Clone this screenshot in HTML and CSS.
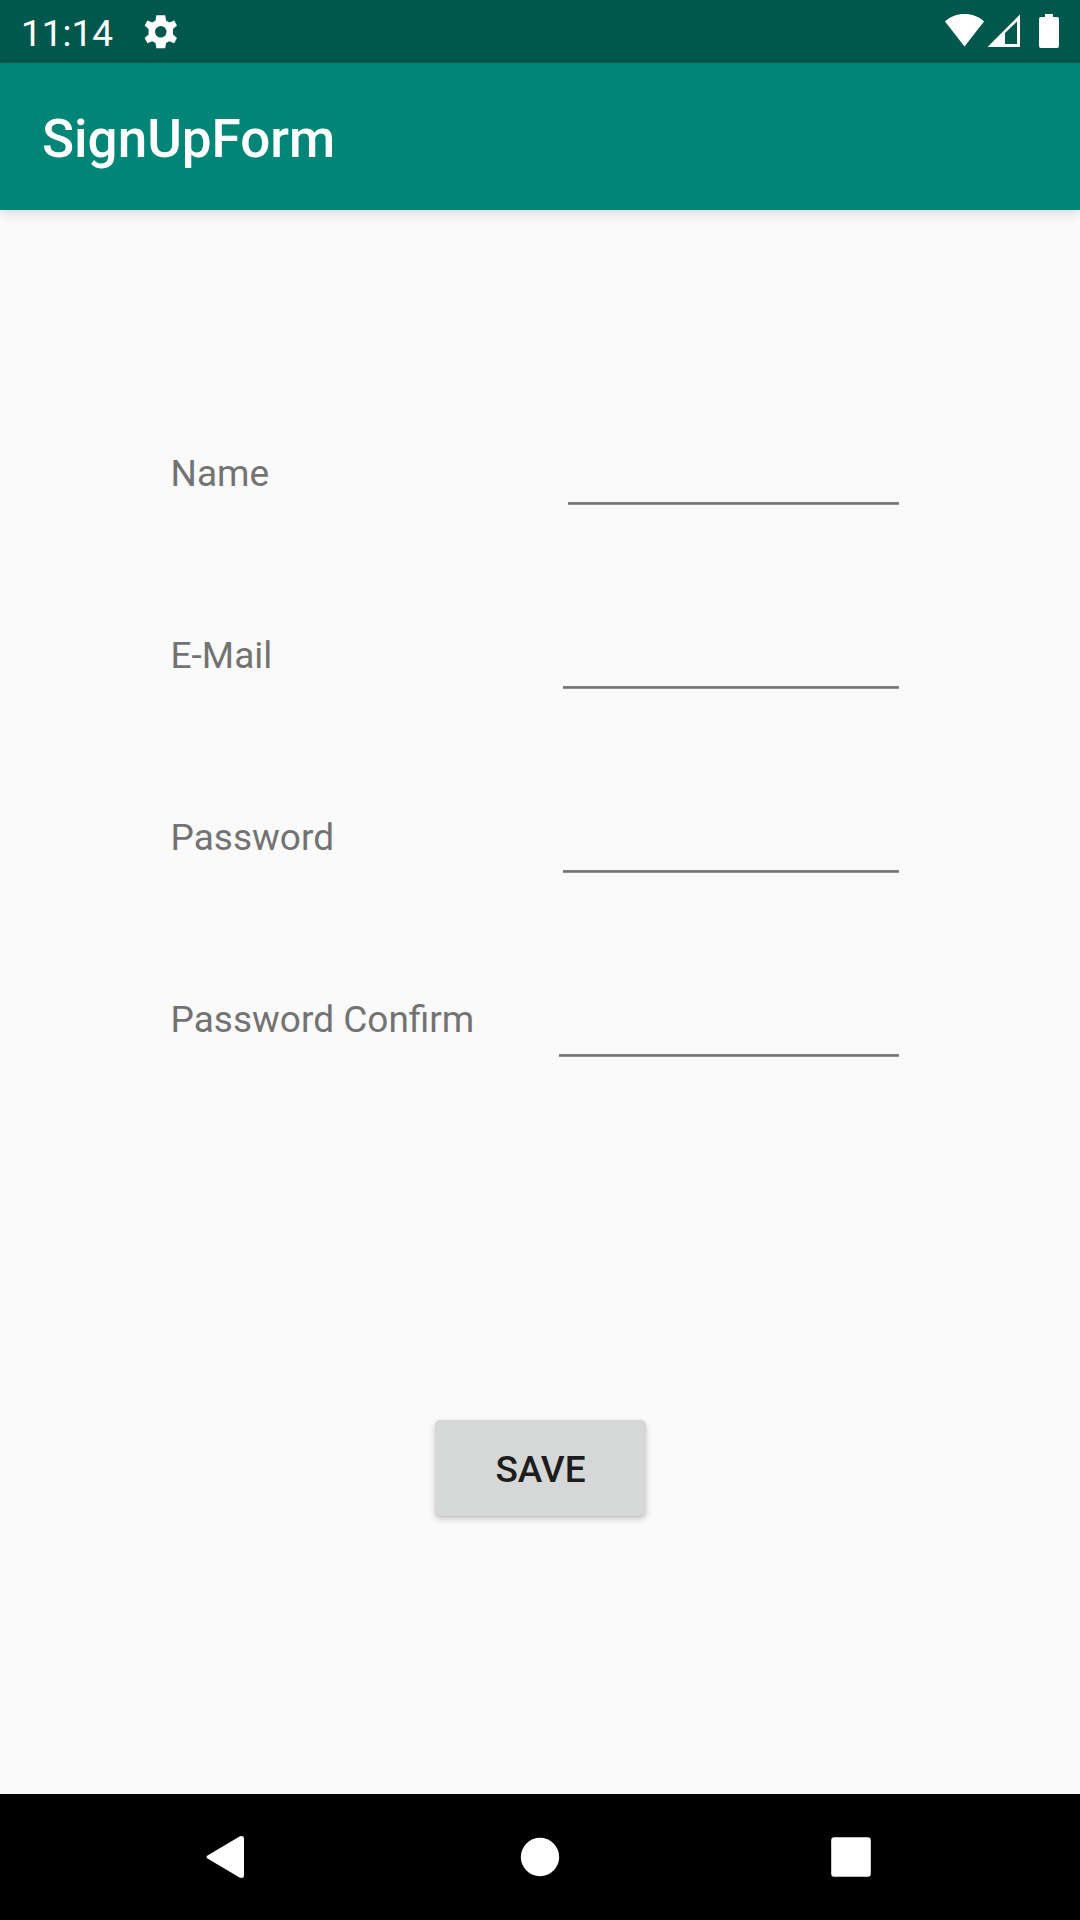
FILE: index.html
```html
<!DOCTYPE html>
<html lang="en">
<head>
<meta charset="utf-8">
<title>SignUpForm</title>
<link rel="stylesheet" href="styles.css">
</head>
<body>
<div class="screen">
  <div class="status-bar">
    <span class="clock">11:14</span>
    <svg class="gear" viewBox="0 0 24 24"><path fill-rule="evenodd" d="M9.300 2H14.700L15.200 5.200L17.200 6.300L20.100 5.100L21.800 8.200L19.400 10.300V13.700L21.800 15.800L20.100 18.900L17.200 17.700L15.200 18.800L14.700 22H9.300L8.800 18.800L6.800 17.700L3.900 18.900L2.200 15.800L4.600 13.700V10.300L2.200 8.200L3.900 5.100L6.800 6.300L8.800 5.200ZM12 8.500a3.500 3.500 0 1 0 0 7a3.500 3.500 0 1 0 0-7Z"/></svg>
    <svg class="indicators" viewBox="0 0 115 36">
      <path d="M0 9.500C5 4.500 12 2 19.500 2S34 4.500 39 9.500L19.500 34.500Z"/>
      <path fill-rule="evenodd" d="M42.500 35L75 2.500V35ZM60 21V32H72V9.500Z"/>
      <path d="M100 2h8v3h4a2 2 0 0 1 2 2v27a2 2 0 0 1-2 2H96a2 2 0 0 1-2-2V7a2 2 0 0 1 2-2h4z"/>
    </svg>
  </div>
  <header class="app-bar"><h1 class="title">SignUpForm</h1></header>
  <main class="content">
    <form class="form">
      <div class="fields">
        <div class="labels">
          <label for="name">Name</label>
          <label for="email">E-Mail</label>
          <label for="password">Password</label>
          <label for="confirm">Password Confirm</label>
        </div>
        <div class="inputs">
          <input class="field field-name" id="name" type="text">
          <input class="field field-email" id="email" type="email">
          <input class="field field-email" id="password" type="password">
          <input class="field field-confirm" id="confirm" type="password">
        </div>
      </div>
      <button class="save" type="button">SAVE</button>
    </form>
  </main>
  <nav class="nav-bar">
    <svg class="nav-icon" viewBox="0 0 48 48"><path d="M5.500 22.500L37.500 3.400Q42 1.800 42 6V42Q42 46.200 37.500 44.600L5.500 25.500Q3.500 24 5.500 22.500Z"/></svg>
    <svg class="nav-icon" viewBox="0 0 48 48"><circle cx="25" cy="24" r="19.200"/></svg>
    <svg class="nav-icon" viewBox="0 0 48 48"><rect x="4.200" y="4.200" width="39.600" height="39.600" rx="3"/></svg>
  </nav>
</div>
</body>
</html>
```
FILE: styles.css
```css
* { box-sizing: border-box; }

body {
  margin: 0;
  font-family: Roboto, "Liberation Sans", sans-serif;
  font-size: 37px;
  line-height: 43px;
}

.screen {
  display: flex;
  flex-direction: column;
  width: 1080px;
  height: 1920px;
  overflow: hidden;
  background: #fafafa;
}

.status-bar {
  display: flex;
  flex: none;
  height: 63px;
  padding: 12px 20px 0 21px;
  background: #00574b;
  color: #fff;
}

.status-bar svg,
.nav-icon { fill: #fff; }

.clock { width: 120px; }

.gear {
  width: 39.6px;
  height: 39.6px;
}

.indicators {
  width: 115px;
  height: 36px;
  margin-left: auto;
}

.app-bar {
  z-index: 1;
  display: flex;
  flex: none;
  align-items: center;
  height: 147px;
  padding: 4px 42px 0;
  background: #008577;
  color: #fff;
  box-shadow: 0 4px 12px rgba(0, 0, 0, .12);
}

.title {
  margin: 0;
  font-size: 53px;
  font-weight: 500;
  line-height: 62px;
}

.content {
  flex: 1;
  padding: 242px 181px 0 170.6px;
}

.form {
  display: flex;
  flex-direction: column;
}

.fields {
  display: flex;
  justify-content: space-between;
  height: 605px;
}

.labels {
  display: flex;
  flex-direction: column;
  gap: 139px;
  color: #737373;
}

.inputs {
  display: flex;
  flex-direction: column;
  align-items: flex-end;
  gap: 131px;
}

/* The underline is three pixels tall with softened outer rows. */
.field {
  height: 53px;
  padding: 0 0 6px;
  border: 0;
  outline: 0;
  background: linear-gradient(#808080 1px, #737373 1px, #737373 2px, #919191 2px) bottom / 100% 3px no-repeat;
  font: inherit;
}

.field-name { width: 331px; }
.field-email { width: 336px; }
.field-confirm { width: 340px; }

.save {
  width: 211px;
  height: 96px;
  margin: 363px 0 0 264.4px;
  padding: 2px 0 0;
  border: 0;
  border-radius: 5px;
  background: #d6d8d7;
  box-shadow: 0 3px 6px rgba(0, 0, 0, .2), 0 1px 1px rgba(0, 0, 0, .08);
  color: #1d1d1d;
  font: 500 37px/43px Roboto, "Liberation Sans", sans-serif;
}

.nav-bar {
  display: flex;
  flex: none;
  align-items: center;
  justify-content: space-between;
  height: 126px;
  padding: 0 205px 0 202px;
  background: #000;
}

.nav-icon {
  width: 48px;
  height: 48px;
}
```
